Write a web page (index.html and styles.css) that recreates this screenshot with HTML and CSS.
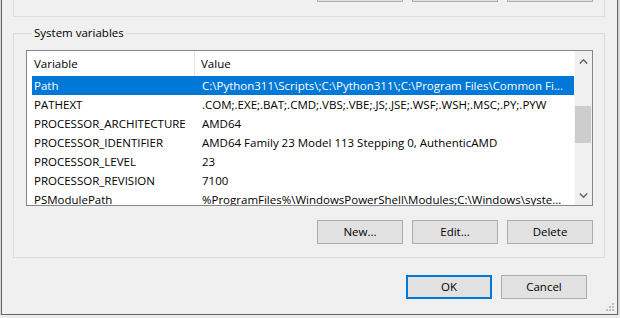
FILE: index.html
```html
<!DOCTYPE html>
<html lang="en">
<head>
  <meta charset="UTF-8" />
  <title>Environment Variables</title>
  <link rel="stylesheet" href="styles.css">
</head>
<body>
  <div class="window">
    <!-- user variables group, mostly scrolled above the view (only button edges show) -->
    <div class="group user-group">
      <div class="btn-row">
        <button class="btn" aria-label="New"></button>
        <button class="btn" aria-label="Edit"></button>
        <button class="btn" aria-label="Delete"></button>
      </div>
    </div>

    <div class="group system-group">
      <div class="group-title">System variables</div>

      <div class="listbox">
        <div class="list-body">
          <div class="list-header">
            <div class="head-cell name">Variable</div>
            <div class="head-cell value">Value</div>
          </div>
          <div class="row selected">
            <div class="cell name">Path</div>
            <div class="cell value">C:\Python311\Scripts\;C:\Python311\;C:\Program Files\Common Fi...</div>
          </div>
          <div class="row">
            <div class="cell name">PATHEXT</div>
            <div class="cell value">.COM;.EXE;.BAT;.CMD;.VBS;.VBE;.JS;.JSE;.WSF;.WSH;.MSC;.PY;.PYW</div>
          </div>
          <div class="row">
            <div class="cell name">PROCESSOR_ARCHITECTURE</div>
            <div class="cell value">AMD64</div>
          </div>
          <div class="row">
            <div class="cell name">PROCESSOR_IDENTIFIER</div>
            <div class="cell value">AMD64 Family 23 Model 113 Stepping 0, AuthenticAMD</div>
          </div>
          <div class="row">
            <div class="cell name">PROCESSOR_LEVEL</div>
            <div class="cell value">23</div>
          </div>
          <div class="row">
            <div class="cell name">PROCESSOR_REVISION</div>
            <div class="cell value">7100</div>
          </div>
          <div class="row">
            <div class="cell name">PSModulePath</div>
            <div class="cell value">%ProgramFiles%\WindowsPowerShell\Modules;C:\Windows\syste...</div>
          </div>
        </div>

        <div class="scrollbar">
          <div class="arrow">
            <svg width="9" height="5" viewBox="0 0 9 5"><polyline points="0.8,4.4 4.5,0.8 8.2,4.4" fill="none" stroke="#606060" stroke-width="1.4"/></svg>
          </div>
          <div class="track"><div class="thumb"></div></div>
          <div class="arrow">
            <svg width="9" height="5" viewBox="0 0 9 5"><polyline points="0.8,0.6 4.5,4.2 8.2,0.6" fill="none" stroke="#606060" stroke-width="1.4"/></svg>
          </div>
        </div>
      </div>

      <div class="btn-row">
        <button class="btn">New...</button>
        <button class="btn">Edit...</button>
        <button class="btn">Delete</button>
      </div>
    </div>

    <div class="dialog-btns">
      <button class="btn default">OK</button>
      <button class="btn">Cancel</button>
    </div>

    <svg class="grip" width="8" height="8" viewBox="0 0 8 8" aria-hidden="true">
      <rect x="6" y="0" width="2" height="2" fill="#bcbcbc"/>
      <rect x="3" y="3" width="2" height="2" fill="#bcbcbc"/>
      <rect x="6" y="3" width="2" height="2" fill="#bcbcbc"/>
      <rect x="0" y="6" width="2" height="2" fill="#bcbcbc"/>
      <rect x="3" y="6" width="2" height="2" fill="#bcbcbc"/>
      <rect x="6" y="6" width="2" height="2" fill="#bcbcbc"/>
    </svg>
  </div>
</body>
</html>
```

FILE: styles.css
```css
body {
  margin: 0;
  background: #ececec;
  font-family: 'Open Sans', 'Noto Sans', sans-serif;
  font-size: 11.5px;
  color: #000;
  overflow: hidden;
}

/* dialog window, top part sits above the view */
.window {
  position: relative;
  box-sizing: border-box;
  width: 617px;
  margin: -44px 0 0 1px;
  padding: 10px 0 15px;
  background: #f0f0f0;
  border: 1px solid #666;
  box-shadow: 0 1px 4px rgba(0, 0, 0, 0.25);
}

.group {
  margin: 0 12px 0 11px;
  padding: 0 11px 13px 12px;
  border: 1px solid #dcdcdc;
}
.user-group {
  padding-top: 10px;
  padding-bottom: 14px;
}
.system-group {
  margin-top: 16px;
}

.group-title {
  width: fit-content;
  margin: -9px 0 0 6px;
  padding: 0 2px;
  line-height: 15px;
  background: #f0f0f0;
}

/* list view */
.listbox {
  display: flex;
  height: 156px;
  box-sizing: border-box;
  margin-top: 10px;
  background: #fff;
  border: 1px solid #828790;
  overflow: hidden;
}
.list-body {
  flex: 1;
  min-width: 0;
  overflow: hidden;
}

.list-header {
  display: flex;
  height: 25px;
  line-height: 25px;
}
.head-cell.name {
  width: 168px;
  padding-left: 7px;
  box-sizing: border-box;
  border-right: 1px solid #e5e5e5;
}
.head-cell.value {
  padding-left: 6px;
}

.row {
  display: flex;
  height: 19px;
  line-height: 19px;
  margin-left: 5px;
  white-space: nowrap;
}
.row.selected {
  background: #0078d7;
  color: #fff;
}
.cell.name {
  flex: none;
  width: 163px;
  padding-left: 2px;
  box-sizing: border-box;
}
.cell.value {
  flex: 1;
  min-width: 0;
  padding-left: 7px;
  overflow: hidden;
}

.scrollbar {
  flex: none;
  width: 18px;
  display: flex;
  flex-direction: column;
  background: #f0f0f0;
  border-left: 1px solid #f7f7f7;
  box-sizing: border-box;
}
.arrow {
  height: 20px;
  display: flex;
  align-items: center;
  justify-content: center;
}
.track {
  flex: 1;
  padding: 35px 1px 0 0;
}
.thumb {
  height: 37px;
  background: #cdcdcd;
}

/* buttons */
.btn-row,
.dialog-btns {
  display: flex;
  justify-content: flex-end;
  gap: 9px;
}
.system-group .btn-row {
  margin-top: 14px;
}
.dialog-btns {
  margin: 17px 30px 0 0;
}

.btn {
  width: 86px;
  height: 24px;
  padding: 0;
  box-sizing: border-box;
  font: inherit;
  line-height: 22px;
  color: #000;
  background: #e1e1e1;
  border: 1px solid #adadad;
}
.btn.default {
  border: 2px solid #0078d7;
  line-height: 20px;
}

.grip {
  position: absolute;
  right: 3px;
  bottom: 3px;
}
```
